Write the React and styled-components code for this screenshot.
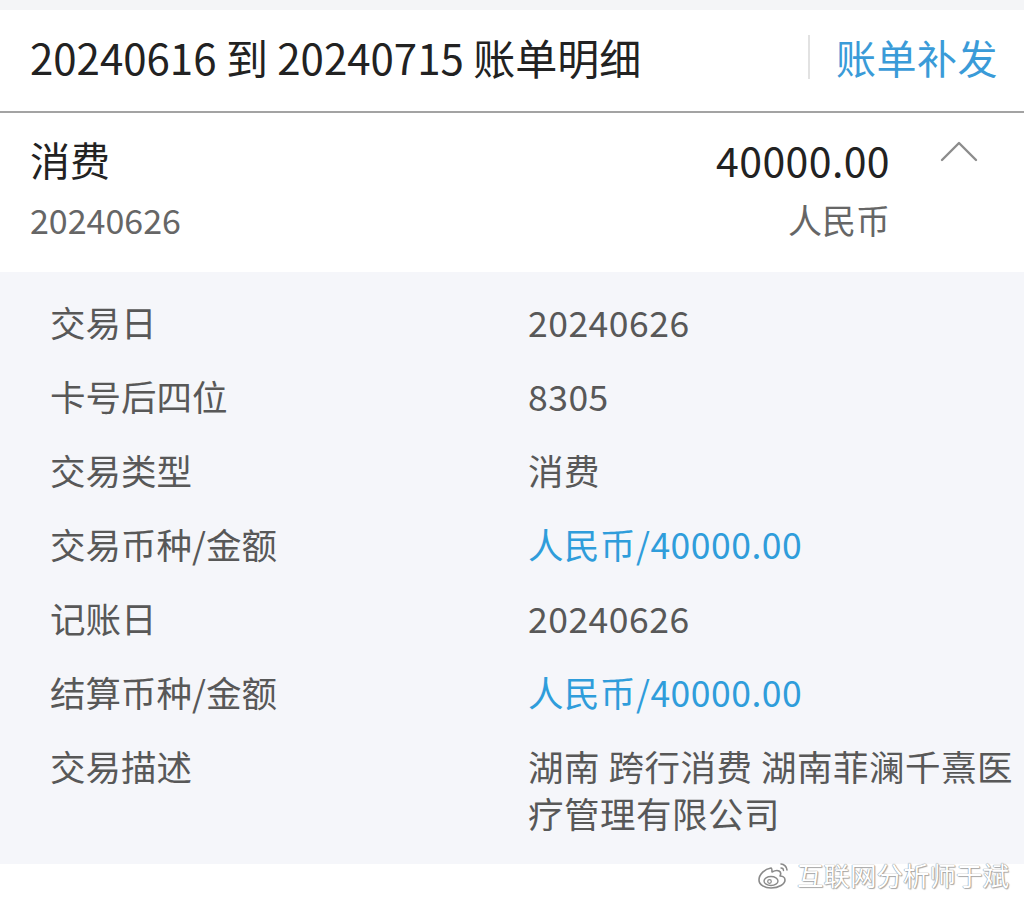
import React from 'react';
import styled, { createGlobalStyle } from 'styled-components';

const GlobalStyle = createGlobalStyle`
  html, body {
    margin: 0;
    padding: 0;
    background: #ffffff;
  }
  body {
    font-family: "Noto Sans CJK SC", "Noto Sans", sans-serif;
  }
`;

const Page = styled.div`
  position: relative;
  width: 1024px;
  height: 900px;
  overflow: hidden;
  background: #ffffff;
`;

const TopStrip = styled.div`
  height: 10px;
  background: #f4f5f7;
`;

const Header = styled.header`
  display: flex;
  align-items: center;
  height: 103px;
  padding: 0 26px 8px 30px;
  box-sizing: border-box;
  border-bottom: 2px solid #a3a3a3;
`;

const Title = styled.h1`
  margin: 0;
  font-size: 42px;
  font-weight: 400;
  color: #222222;
  white-space: nowrap;
`;

const Divider = styled.span`
  width: 2px;
  height: 44px;
  margin-left: auto;
  margin-right: 26px;
  background: #e2e2e2;
`;

const LinkButton = styled.button`
  border: none;
  background: transparent;
  padding: 0;
  font-family: inherit;
  font-size: 40px;
  color: #3a9bd8;
  cursor: pointer;
  letter-spacing: 0.5px;
`;

const Summary = styled.section`
  display: flex;
  align-items: flex-start;
  padding: 21px 46px 30px 30px;
`;

const SummaryCol = styled.div`
  display: flex;
  flex-direction: column;
  align-items: ${p => (p.$right ? 'flex-end' : 'flex-start')};
  flex: ${p => (p.$grow ? '1 1 auto' : '0 0 auto')};
  gap: 14px;
`;

const Kind = styled.div`
  font-size: 40px;
  line-height: 50px;
  color: #222222;
`;

const Amount = styled.div`
  font-size: 41px;
  line-height: 50px;
  color: #222222;
  letter-spacing: 0.4px;
`;

const SubText = styled.div`
  font-size: 34px;
  line-height: 44px;
  color: #666666;
`;

const Chevron = styled.button`
  display: flex;
  border: none;
  background: transparent;
  padding: 0;
  margin: 5px 0 0 50px;
  cursor: pointer;
`;

const Details = styled.section`
  background: #f5f6fa;
  padding: 12px 0 15px 50px;
`;

const Row = styled.div`
  display: grid;
  grid-template-columns: 478px 1fr;
  padding: 13.5px 0;
  font-size: 35.5px;
  line-height: 47px;
`;

const Label = styled.div`
  color: #585858;
`;

const Value = styled.div`
  color: ${p => (p.$accent ? '#2f9ddb' : '#585858')};
  letter-spacing: 0.5px;
  word-break: break-all;
`;

const Watermark = styled.div`
  position: absolute;
  left: 756px;
  top: 858px;
  display: flex;
  align-items: center;
  gap: 5px;
  font-size: 26.5px;
  line-height: 34px;
  color: #ffffff;
  text-shadow: 0 0 1px #8a8a8a, 0 0 1px #8a8a8a, 1px 1px 1px #b0b0b0;
  white-space: nowrap;
`;

const WeiboLogo = () => (
  <svg width="36" height="30" viewBox="0 0 36 30" fill="none">
    <path
      d="M15 8c-6 1-12 6-12 12 0 5 6 8 12 8 8 0 14-4 14-8 0-3-3-4-5-4 1-2 1-4-1-5-2-1-5 0-7 1 0-2-0-4-1-4z"
      fill="#ffffff"
      stroke="#8a8a8a"
      strokeWidth="1.6"
      strokeLinejoin="round"
    />
    <ellipse cx="15" cy="21" rx="7" ry="4.5" stroke="#8a8a8a" strokeWidth="1.4" />
    <circle cx="13.5" cy="21.5" r="1.8" stroke="#8a8a8a" strokeWidth="1.2" />
    <path d="M25 4c3 0 6 3 6 6" stroke="#8a8a8a" strokeWidth="1.6" strokeLinecap="round" />
    <path d="M25 8c1.5 0 2.5 1 2.5 2.5" stroke="#8a8a8a" strokeWidth="1.4" strokeLinecap="round" />
  </svg>
);

const details = [
  { label: '交易日', value: '20240626' },
  { label: '卡号后四位', value: '8305' },
  { label: '交易类型', value: '消费' },
  { label: '交易币种/金额', value: '人民币/40000.00', accent: true },
  { label: '记账日', value: '20240626' },
  { label: '结算币种/金额', value: '人民币/40000.00', accent: true },
  { label: '交易描述', value: '湖南 跨行消费 湖南菲澜千熹医疗管理有限公司' },
];

export default function App() {
  return (
    <Page>
      <GlobalStyle />
      <TopStrip />
      <Header>
        <Title>20240616 到 20240715 账单明细</Title>
        <Divider />
        <LinkButton>账单补发</LinkButton>
      </Header>
      <Summary>
        <SummaryCol $grow>
          <Kind>消费</Kind>
          <SubText>20240626</SubText>
        </SummaryCol>
        <SummaryCol $right>
          <Amount>40000.00</Amount>
          <SubText>人民币</SubText>
        </SummaryCol>
        <Chevron aria-label="收起">
          <svg width="38" height="24" viewBox="0 0 38 24" fill="none">
            <path d="M2 21L19 4l17 17" stroke="#8c8c8c" strokeWidth="2.4" strokeLinecap="round" strokeLinejoin="round" />
          </svg>
        </Chevron>
      </Summary>
      <Details>
        {details.map(item => (
          <Row key={item.label}>
            <Label>{item.label}</Label>
            <Value $accent={item.accent}>{item.value}</Value>
          </Row>
        ))}
      </Details>
      <Watermark>
        <WeiboLogo />
        <span>互联网分析师于斌</span>
      </Watermark>
    </Page>
  );
}
